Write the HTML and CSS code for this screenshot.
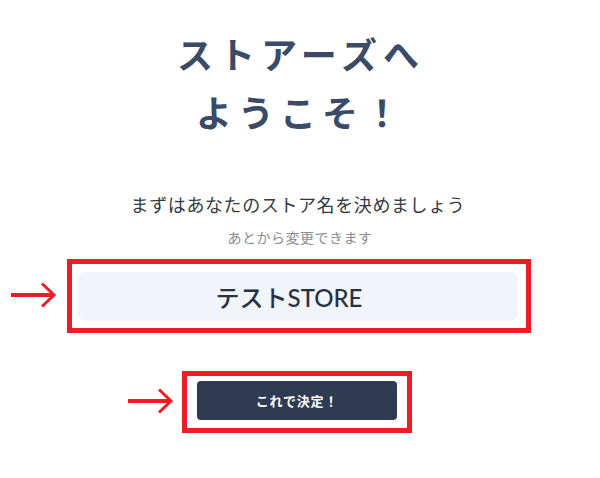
FILE: index.html
```html
<!DOCTYPE html>
<html lang="ja">
<head>
<meta charset="utf-8">
<link rel="stylesheet" href="styles.css">
</head>
<body>
<main class="page">
  <h1 class="title"><span>ストアーズへ</span><span>ようこそ！</span></h1>
  <p class="lead">まずはあなたのストア名を決めましょう</p>
  <p class="note">あとから変更できます</p>
  <div class="mark mark-input">
    <svg class="arrow arrow-input" width="48" height="26" viewBox="0 0 48 26"><path d="M1 13H43" stroke="#ee1c25" stroke-width="4" fill="none"/><path d="M32 1.5L44 13L32 24.5" stroke="#ee1c25" stroke-width="3" fill="none"/></svg>
    <div class="store-input">テストSTORE</div>
  </div>
  <div class="mark mark-button">
    <svg class="arrow arrow-button" width="48" height="26" viewBox="0 0 48 26"><path d="M1 13H43" stroke="#ee1c25" stroke-width="4" fill="none"/><path d="M32 1.5L44 13L32 24.5" stroke="#ee1c25" stroke-width="3" fill="none"/></svg>
    <button class="decide">これで決定！</button>
  </div>
</main>
</body>
</html>
```
FILE: styles.css
```css
html, body {
  margin: 0;
  padding: 0;
  background: #ffffff;
}
body {
  font-family: Lato, "Noto Sans CJK JP", sans-serif;
}
.page {
  width: 600px;
  display: flex;
  flex-direction: column;
  align-items: center;
  padding-top: 26px;
}
.title {
  margin: 0;
  display: flex;
  flex-direction: column;
  align-items: center;
  font-size: 36px;
  font-weight: 700;
  line-height: 58px;
  letter-spacing: 6px;
  color: #3b4a66;
  padding-left: 2px;
}
.lead {
  margin: 51px 0 0;
  padding-right: 4px;
  font-size: 18px;
  line-height: 24px;
  letter-spacing: 0.6px;
  color: #333a45;
}
.note {
  margin: 11px 0 0;
  font-size: 14px;
  line-height: 20px;
  letter-spacing: 0.5px;
  color: #8a8d93;
}
.mark {
  position: relative;
  border: 5px solid #ee1c25;
  box-sizing: border-box;
}
.mark-input {
  margin-top: 11px;
  width: 464px;
  height: 74px;
  padding: 8px 8px 7px 6px;
  margin-left: -2px;
}
.mark-button {
  margin-top: 38px;
  width: 230px;
  height: 62px;
  padding: 5px 10px 8px;
  margin-left: -6px;
}
.arrow {
  position: absolute;
  top: 50%;
  transform: translateY(-50%);
}
.arrow-input {
  left: -62px;
  margin-top: -1px;
}
.arrow-button {
  left: -60px;
  margin-top: -1px;
}
.store-input {
  height: 100%;
  box-sizing: border-box;
  padding-right: 18px;
  background: #f1f4f9;
  border-radius: 8px;
  display: flex;
  align-items: center;
  justify-content: center;
  font-size: 24px;
  font-weight: 500;
  color: #263244;
}
.decide {
  width: 100%;
  height: 100%;
  border: 0;
  border-radius: 4px;
  background: #2e3b52;
  color: #ffffff;
  font-family: Lato, "Noto Sans CJK JP", sans-serif;
  font-size: 13px;
  font-weight: 700;
  letter-spacing: 0.8px;
  padding: 0;
}
```
